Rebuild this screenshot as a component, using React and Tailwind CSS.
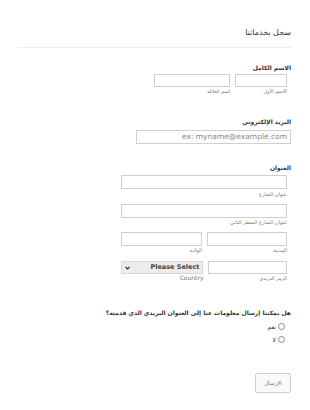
import React from "react";

const ar = { fontFamily: '"DejaVu Sans", "Liberation Sans", sans-serif' };

function Box({ className = "" }) {
  return <div className={`h-[13px] border border-[#cfcfcf] bg-white ${className}`} />;
}

function Sub({ children, className = "" }) {
  return (
    <div className={`text-[5px] leading-[8px] text-[#777] ${className}`}>{children}</div>
  );
}

function Label({ children, className = "" }) {
  return (
    <div className={`text-[6px] leading-[10px] font-bold text-[#333] ${className}`}>
      {children}
    </div>
  );
}

function Radio({ label }) {
  return (
    <div className="flex items-center gap-[2px] pr-[6px] h-[13px]">
      <span className="w-[7px] h-[7px] rounded-full border border-[#888] bg-white" />
      <span className="text-[6px] text-[#333]">{label}</span>
    </div>
  );
}

export default function App() {
  return (
    <div
      dir="rtl"
      style={ar}
      className="w-[310px] h-[410px] bg-white pr-[19px] pl-[18px] overflow-hidden"
    >
      <div className="mt-[26px] text-[8px] leading-[14px] text-[#333]">سجل بخدماتنا</div>
      <div className="mt-[7px] h-px bg-[#ececec]" />

      <Label className="mt-[15px]">الاسم الكامل</Label>
      <div className="mt-[1px] flex gap-[5px] pr-[4px]">
        <div className="w-[52px]">
          <Box />
          <Sub>الاسم الأول</Sub>
        </div>
        <div className="w-[76px]">
          <Box />
          <Sub>اسم العائلة</Sub>
        </div>
      </div>

      <Label className="mt-[22px]">البريد الإلكتروني</Label>
      <div className="mt-[3px] w-[155px] h-[14px] border border-[#cfcfcf] flex items-center pr-[3px]">
        <span
          dir="ltr"
          className="text-[7.5px] text-[#8a8a8a] leading-none"
          style={{ fontFamily: '"DejaVu Sans", sans-serif' }}
        >
          ex: myname@example.com
        </span>
      </div>

      <Label className="mt-[19px]">العنوان</Label>
      <div className="mt-[2px] pr-[4px] w-[170px]">
        <Box className="h-[14px]" />
        <Sub className="mt-[1px]">عنوان الشارع</Sub>
        <Box className="h-[14px] mt-[6px]" />
        <Sub>عنوان الشارع السطر الثاني</Sub>
        <div className="mt-[6px] flex gap-[5px]">
          <div className="w-[80px]">
            <Box className="h-[14px]" />
            <Sub>المدينة</Sub>
          </div>
          <div className="w-[81px]">
            <Box className="h-[14px]" />
            <Sub>الولاية</Sub>
          </div>
        </div>
        <div className="mt-[7px] flex gap-[5px]">
          <div className="w-[80px]">
            <Box />
            <Sub>الرمز البريدي</Sub>
          </div>
          <div className="w-[84px]">
            <div
              dir="ltr"
              className="h-[13px] bg-[#ececec] border border-[#d8d8d8] flex items-center justify-between px-[3px]"
              style={{ fontFamily: '"DejaVu Sans", sans-serif' }}
            >
              <svg width="5" height="4" viewBox="0 0 5 4">
                <path d="M0.5 1 L2.5 3 L4.5 1" fill="none" stroke="#333" strokeWidth="1.2" />
              </svg>
              <span className="text-[6.5px] font-bold text-[#444] leading-none">Please Select</span>
            </div>
            <div
              dir="ltr"
              className="text-[6px] leading-[8px] text-[#777] text-right"
              style={{ fontFamily: '"DejaVu Sans", sans-serif' }}
            >
              Country
            </div>
          </div>
        </div>
      </div>

      <Label className="mt-[26px]">هل يمكننا إرسال معلومات عنا إلى العنوان البريدي الذي قدمته؟</Label>
      <div className="mt-[2px]">
        <Radio label="نعم" />
        <Radio label="لا" />
      </div>

      <div className="mt-[27px] w-[36px] h-[20px] border border-[#d0d0d0] rounded-[2px] bg-[#fafafa] flex items-center justify-center text-[5.5px] text-[#777]">
        الإرسال
      </div>
    </div>
  );
}
